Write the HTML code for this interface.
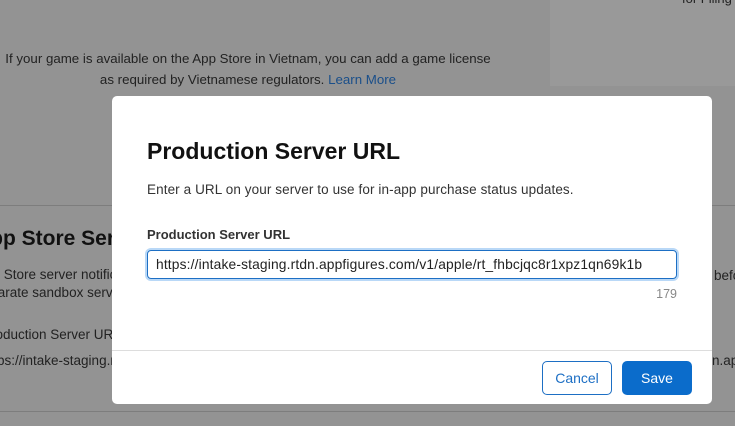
<!DOCTYPE html>
<html><head><style>
body{margin:0;width:735px;height:426px;overflow:hidden;background:#939393;font-family:"Liberation Sans",sans-serif;position:relative}
.a{position:absolute}
</style></head><body>
<div class="a" style="left:550px;top:0;width:185px;height:86px;background:#999"></div>
<div class="a" style="left:682px;top:-9px;font-size:13px;color:#222">for Filing</div>
<div class="a" style="left:-10px;top:48px;width:516px;text-align:center;font-size:13.3px;line-height:21px;color:#222;white-space:nowrap">If your game is available on the App Store in Vietnam, you can add a game license<br>as required by Vietnamese regulators. <span style="color:#1a4f8a">Learn More</span></div>
<div class="a" style="left:0;top:205px;width:735px;height:1px;background:#7d7d7d"></div>
<div class="a" style="left:0;top:411px;width:735px;height:1px;background:#7d7d7d"></div>
<div class="a" style="left:-25px;top:227px;font-size:21px;font-weight:bold;color:#111">App Store Server</div>
<div class="a" style="left:-24px;top:266px;font-size:13.5px;line-height:18px;color:#222">App Store server notifications<br>separate sandbox server</div>
<div class="a" style="left:-18px;top:327px;font-size:13.5px;color:#222">Production Server URL</div>
<div class="a" style="left:-18px;top:353px;font-size:13.5px;color:#222">https://intake-staging.rtdn</div>
<div class="a" style="left:714px;top:268px;font-size:13.5px;color:#222">before</div>
<div class="a" style="left:712px;top:353px;font-size:13.5px;color:#222">n.app</div>
<div class="a" style="left:112px;top:96px;width:600px;height:308px;background:#fff;border-radius:5px">
<div class="a" style="left:35px;top:42px;font-size:23px;font-weight:bold;color:#111">Production Server URL</div>
<div class="a" style="left:35px;top:86px;font-size:13.5px;letter-spacing:0.1px;color:#333">Enter a URL on your server to use for in-app purchase status updates.</div>
<div class="a" style="left:35px;top:131px;font-size:13px;font-weight:bold;color:#333">Production Server URL</div>
<div class="a" style="left:35px;top:154px;height:27px;border:1px solid #1d6fc4;border-radius:4px;box-shadow:0 0 0 2px #b9d8f7;font-size:13.8px;letter-spacing:0.15px;line-height:27px;padding-left:8px;width:520px;color:#222;white-space:nowrap">https://intake-staging.rtdn.appfigures.com/v1/apple/rt_fhbcjqc8r1xpz1qn69k1b</div>
<div class="a" style="left:465px;width:100px;text-align:right;top:191px;font-size:12.5px;color:#888">179</div>
<div class="a" style="left:0;top:254px;width:600px;height:1px;background:#ddd"></div>
<div class="a" style="left:430px;top:265px;width:68px;height:32px;border:1px solid #1d6fc4;border-radius:5px;color:#1d6fc4;font-size:14px;text-align:center;line-height:32px">Cancel</div>
<div class="a" style="left:510px;top:265px;width:70px;height:34px;background:#0b6ccb;border-radius:5px;color:#fff;font-size:14px;text-align:center;line-height:34px">Save</div>
</div>
</body></html>
